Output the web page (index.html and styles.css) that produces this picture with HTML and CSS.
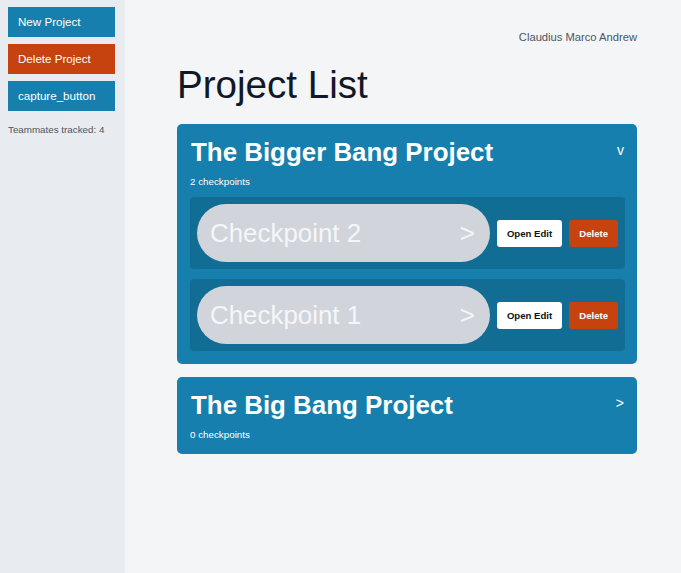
FILE: index.html
```html
<!DOCTYPE html>
<html lang="en">
<head>
    <meta charset="UTF-8">
    <title>Project List</title>
    <link rel="stylesheet" href="styles.css">
</head>
<body>

<div id="app">
    <div class="sidebar">
        <button class="side-btn">New Project</button>
        <button class="side-btn danger">Delete Project</button>
        <button class="side-btn">capture_button</button>
        <p class="tracked">Teammates tracked: 4</p>
    </div>

    <div class="main">
        <div class="user-name">Claudius Marco Andrew</div>
        <h1 class="page-title">Project List</h1>

        <div class="project">
            <div class="project-head">
                <h2>The Bigger Bang Project</h2>
                <span class="toggle">v</span>
            </div>
            <div class="count">2 checkpoints</div>
            <div class="checkpoints">
                <div class="checkpoint">
                    <div class="pill"><span>Checkpoint 2</span><span>&gt;</span></div>
                    <button class="small-btn">Open Edit</button>
                    <button class="small-btn danger">Delete</button>
                </div>
                <div class="checkpoint">
                    <div class="pill"><span>Checkpoint 1</span><span>&gt;</span></div>
                    <button class="small-btn">Open Edit</button>
                    <button class="small-btn danger">Delete</button>
                </div>
            </div>
        </div>

        <div class="project">
            <div class="project-head">
                <h2>The Big Bang Project</h2>
                <span class="toggle">&gt;</span>
            </div>
            <div class="count">0 checkpoints</div>
        </div>
    </div>
</div>

</body>
</html>
```

FILE: styles.css
```css
html, body {
    margin: 0;
    padding: 0;
    height: 100%;
}
body {
    font-family: "Liberation Sans", Arial, sans-serif;
    background-color: #f3f5f7;
    color: #111827;
}
#app {
    display: flex;
    min-height: 100%;
}
.sidebar {
    width: 125px;
    flex-shrink: 0;
    box-sizing: border-box;
    padding: 7px 10px 0 8px;
    background-color: #e8ecf0;
    display: flex;
    flex-direction: column;
    gap: 7px;
}
.side-btn {
    display: block;
    height: 30px;
    border: 0;
    padding: 0 10px 1px;
    text-align: left;
    font-family: inherit;
    font-size: 11.6px;
    color: #fff;
    background-color: #167fad;
    cursor: pointer;
}
.side-btn.danger {
    background-color: #c6430f;
}
.tracked {
    margin: 6px 0 0;
    font-size: 9.8px;
    color: #4b5563;
}
.main {
    flex: 1;
    padding: 31px 44px 20px 52px;
}
.user-name {
    text-align: right;
    font-size: 11.2px;
    line-height: 13px;
    color: #4b5563;
}
.page-title {
    margin: 18px 0 16px;
    font-size: 38.6px;
    font-weight: normal;
    line-height: 46px;
    color: #111827;
}
.project {
    background-color: #167fad;
    border-radius: 5px;
    padding: 13px 12px 13px 13px;
    margin-bottom: 13px;
    color: #fff;
}
.project-head {
    display: flex;
    justify-content: space-between;
    align-items: flex-start;
}
.project-head h2 {
    margin: 0 0 0 1px;
    font-size: 25.9px;
    line-height: 30px;
}
.toggle {
    font-size: 14px;
    margin: 5px 1px 0 0;
}
.count {
    margin-top: 8px;
    font-size: 9.8px;
    line-height: 13px;
}
.checkpoints {
    margin-top: 9px;
    display: flex;
    flex-direction: column;
    gap: 10px;
}
.checkpoint {
    display: flex;
    align-items: center;
    gap: 7px;
    padding: 7px;
    border-radius: 4px;
    background-color: #126d94;
}
.pill {
    flex: 1;
    height: 58px;
    box-sizing: border-box;
    padding: 0 15px 0 13px;
    border-radius: 29px;
    background-color: #d1d5db;
    display: flex;
    justify-content: space-between;
    align-items: center;
    font-size: 25.9px;
    color: #f5f6f8;
}
.small-btn {
    height: 27px;
    padding: 0 10px;
    border: 0;
    border-radius: 3px;
    font-family: inherit;
    font-size: 9.6px;
    font-weight: bold;
    color: #111;
    background-color: #fff;
    cursor: pointer;
}
.small-btn.danger {
    color: #fff;
    background-color: #c6430f;
}
```
